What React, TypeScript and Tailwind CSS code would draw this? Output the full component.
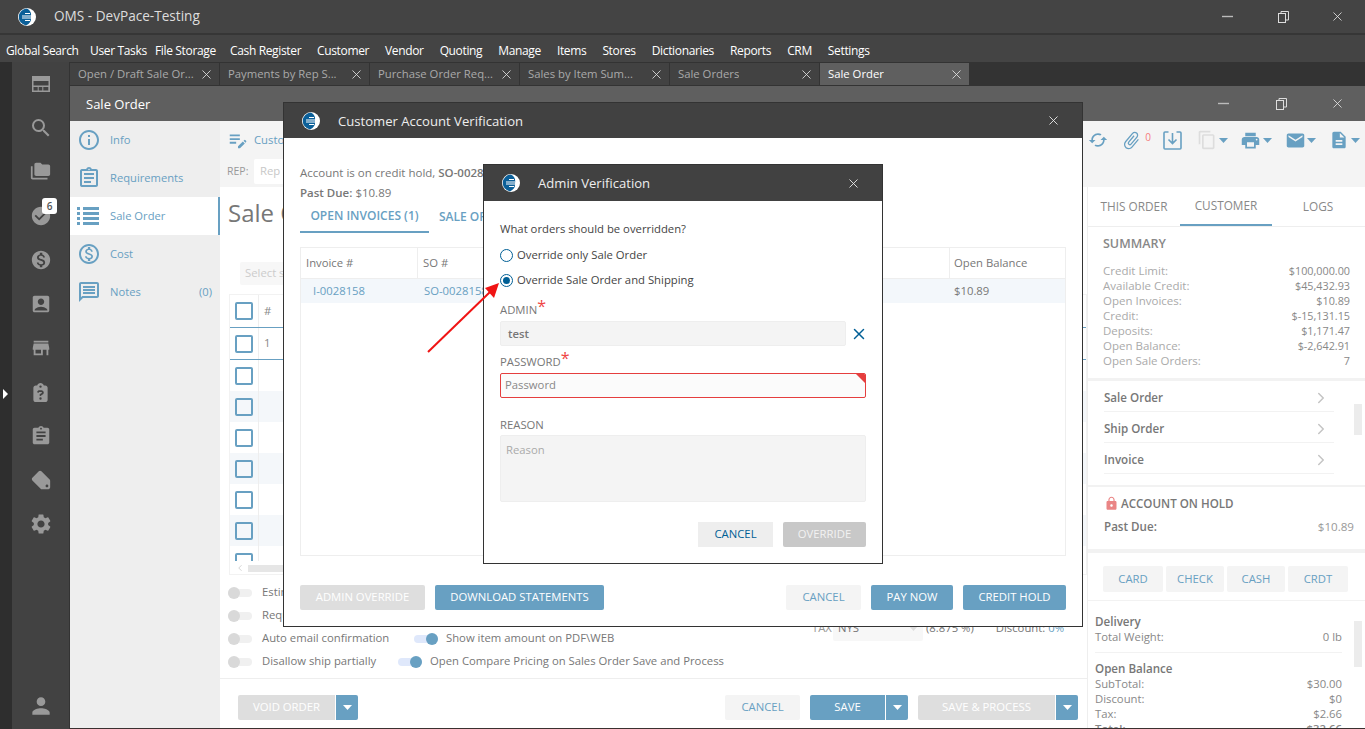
import { ChevronRight, X } from 'lucide-react';
import {
  MdAccountBox,
  MdAssignment,
  MdAttachFile,
  MdCheckCircle,
  MdDescription,
  MdEmail,
  MdFolderCopy,
  MdInfoOutline,
  MdLocalOffer,
  MdLocalPrintshop,
  MdLock,
  MdMonetizationOn,
  MdOutlineAssignment,
  MdOutlineContentCopy,
  MdOutlineEditNote,
  MdOutlineMessage,
  MdOutlineMonetizationOn,
  MdPerson,
  MdSearch,
  MdSettings,
  MdStore,
  MdSync,
} from 'react-icons/md';
import { FaClipboardQuestion } from 'react-icons/fa6';

const MENU_LEFT = [
  ['Global Search', 'w-[84px]'],
  ['User Tasks', 'w-[65px]'],
  ['File Storage', 'w-[75px]'],
  ['Cash Register', 'w-[87px]'],
  ['Customer', 'w-[52px]'],
];
const MENU_RIGHT = ['Vendor', 'Quoting', 'Manage', 'Items', 'Stores', 'Dictionaries', 'Reports', 'CRM', 'Settings'];

const TABS = [
  'Open / Draft Sale Or...',
  'Payments by Rep S...',
  'Purchase Order Req...',
  'Sales by Item Sum...',
  'Sale Orders',
  'Sale Order',
];

const SUMMARY = [
  ['Credit Limit:', '$100,000.00'],
  ['Available Credit:', '$45,432.93'],
  ['Open Invoices:', '$10.89'],
  ['Credit:', '$-15,131.15'],
  ['Deposits:', '$1,171.47'],
  ['Open Balance:', '$-2,642.91'],
  ['Open Sale Orders:', '7'],
];

function Logo() {
  return (
    <svg width="20" height="20" viewBox="0 0 20 20" className="shrink-0">
      <circle cx="10" cy="10" r="9" fill="#fff" />
      <path d="M10 1.5a8.5 8.5 0 0 0-1 16.9 8 8 0 0 0 5-8.4 8 8 0 0 0-4-8.5z" fill="#0b5f98" />
      <path d="M8 6.5h5M5 9h9M5 11h9M8 13.5h5" stroke="#fff" strokeWidth="1" />
    </svg>
  );
}

function Caret({ color = 'white' }: { color?: string }) {
  return (
    <svg width="9" height="5" viewBox="0 0 9 5">
      <path d="M0 0h9L4.5 5z" fill={color} />
    </svg>
  );
}

function WindowControls({ gapA, gapB }: { gapA: string; gapB: string }) {
  return (
    <div className="flex items-center">
      <svg width="11" height="11" viewBox="0 0 11 11" className={gapA}>
        <path d="M0 5.5h11" stroke="#bbb" strokeWidth="1.4" />
      </svg>
      <svg width="11" height="12" viewBox="0 0 11 12" fill="none" stroke="#ddd" className={gapB}>
        <rect x="0.5" y="2.5" width="7" height="9" />
        <path d="M3 2.5v-2h7.5v8.5h-3" />
      </svg>
      <X size={15} strokeWidth={1.3} className="text-[#e8e8e8]" />
    </div>
  );
}

function Toggle({ on = false }: { on?: boolean }) {
  return (
    <span className={`relative block h-[8px] w-[24px] shrink-0 rounded-full ${on ? 'bg-[#dfe8fb]' : 'bg-[#f0f0f0]'}`}>
      <span
        className={`absolute top-[-2px] h-[12px] w-[12px] rounded-full ${on ? 'right-0 bg-[#68a0c2]' : 'left-0 bg-[#d9d9d9]'}`}
      />
    </span>
  );
}

function Check() {
  return <span className="block h-[18px] w-[18px] rounded-[2px] border-2 border-[#68a0c2]" />;
}

function SplitCaret() {
  return (
    <span className="ml-px flex h-[25px] w-[22px] items-center justify-center rounded-r-[2px] bg-[#68a0c2]">
      <Caret />
    </span>
  );
}

function RailIcons() {
  const cls = 'text-[#999]';
  const slot = 'flex h-[44px] w-full shrink-0 items-start justify-center';
  return (
    <div className="flex w-[57px] flex-col items-center pt-[13px]">
      <div className={`${slot} pt-[1px]`}>
        <svg width="18" height="16" viewBox="0 0 18 16" fill="#999">
          <path d="M0 0h18v16H0zM1.500 5v9.500h4.200V11h1v3.500h3.600V11h1v3.500h5V11H1.500V9.500h15V5z" fillRule="evenodd" />
        </svg>
      </div>
      <div className={slot}><MdSearch size={24} className={`${cls} -mt-[3px]`} /></div>
      <div className={slot}><MdFolderCopy size={21} className={`${cls} -mt-[2px]`} /></div>
      <div className={`${slot} relative`}>
        <MdCheckCircle size={22} className={`${cls} -mt-[2px]`} />
        <span className="absolute left-[30px] top-[-9px] flex h-[16px] w-[15px] items-center justify-center rounded-[3px] bg-white text-[10px] font-semibold text-[#555]">
          6
        </span>
      </div>
      <div className={slot}><MdMonetizationOn size={22} className={`${cls} -mt-[2px]`} /></div>
      <div className={slot}><MdAccountBox size={22} className={`${cls} -mt-[2px]`} /></div>
      <div className={slot}><MdStore size={22} className={`${cls} -mt-[2px]`} /></div>
      <div className={slot}><FaClipboardQuestion size={19} className={cls} /></div>
      <div className={slot}><MdAssignment size={22} className={`${cls} -mt-[2px]`} /></div>
      <div className={slot}><MdLocalOffer size={22} className={`${cls} -mt-[2px] rotate-[90deg] scale-x-[-1]`} /></div>
      <div className={slot}><MdSettings size={24} className={`${cls} -mt-[3px]`} /></div>
      <div className="mt-auto mb-[10px] flex justify-center">
        <MdPerson size={26} className={cls} />
      </div>
    </div>
  );
}

function NavItem({ icon, label, active, count }: { icon: React.ReactNode; label: string; active?: boolean; count?: string }) {
  return (
    <div className={`flex h-[38px] items-center pl-[7px] pr-[8px] text-[11.2px] text-[#68a0c2] ${active ? 'border-r-2 border-[#68a0c2] bg-white' : ''}`}>
      <span className="flex w-[33px] shrink-0 items-center justify-start">{icon}</span>
      <span>{label}</span>
      {count && <span className="ml-auto">{count}</span>}
    </div>
  );
}

function Toolbar() {
  return (
    <div className="flex h-[66px] shrink-0 bg-[#f4f4f4]">
      <div className="flex w-[120px] flex-col pl-[7px] pt-[8px]">
        <div className="flex items-center gap-[5px] text-[11.3px] text-[#68a0c2]">
          <MdOutlineEditNote size={22} />
          <span>Customer</span>
        </div>
        <div className="mt-[8px] flex items-center text-[10.500px] text-[#999]">
          <span className="w-[27px]">REP:</span>
          <span className="flex h-[25px] w-[60px] items-center rounded-[2px] bg-white px-[6px] text-[11.3px] text-[#c8c8c8]">Rep</span>
        </div>
      </div>
      <div className="ml-auto flex h-[38px] items-center pr-[5px] text-[#68a0c2]">
        <MdSync size={20} className="mr-[13px] rotate-90" />
        <MdAttachFile size={21} className="rotate-[40deg]" />
        <span className="mb-[6px] ml-[3px] mr-[12px] text-[10px] text-[#f47c7c]">0</span>
        <svg width="19" height="19" viewBox="0 0 19 19" fill="none" stroke="#68a0c2" strokeWidth="1.6" className="mr-[15px]">
          <path d="M5.500 1H2a1 1 0 0 0-1 1v15a1 1 0 0 0 1 1h15a1 1 0 0 0 1-1V2a1 1 0 0 0-1-1h-3.500M9.500 2v10M5.500 8.500l4 4 4-4" />
        </svg>
        <MdOutlineContentCopy size={20} className="text-[#ddd]" />
        <span className="ml-[2px] mr-[12px]"><Caret color="#68a0c2" /></span>
        <MdLocalPrintshop size={21} />
        <span className="ml-[2px] mr-[13px]"><Caret color="#68a0c2" /></span>
        <MdEmail size={21} />
        <span className="ml-[1px] mr-[13px]"><Caret color="#68a0c2" /></span>
        <MdDescription size={20} />
        <span className="ml-[2px]"><Caret color="#68a0c2" /></span>
      </div>
    </div>
  );
}

function MainPanel() {
  const rows = [0, 1, 2, 3, 4, 5, 6];
  return (
    <div className="flex min-w-0 flex-1 flex-col bg-white">
      <div className="flex min-h-0 flex-1 flex-col pl-[9px]">
        <div className="-ml-px mt-[11px] h-[30px] text-[24px] leading-[30px] text-[#777]">Sale Order</div>
        <div className="ml-[11px] mt-[34px] flex h-[23px] w-[200px] items-center rounded-[2px] bg-[#f7f7f7] px-[5px] text-[11.3px] text-[#ccc]">
          Select status
        </div>
        <div className="mt-[9px] h-[281px] shrink-0 overflow-hidden border border-[#f2f2f2] text-[11.3px] text-[#888]">
          <div className="flex h-[33px] items-center border-b border-[#68a0c2]">
            <div className="flex h-full w-[29px] items-center justify-center border-r border-[#eee]"><Check /></div>
            <span className="pl-[5px]">#</span>
          </div>
          <div className="flex h-[32px] items-center border-b border-[#68a0c2]">
            <div className="flex h-full w-[29px] items-center justify-center border-r border-[#eee]"><Check /></div>
            <span className="pl-[5px]">1</span>
          </div>
          <div className="h-[201px] overflow-hidden">
            {rows.map((row) => (
              <div key={row} className={`flex h-[31px] items-center ${row % 2 === 1 ? 'bg-[#f4f7fa]' : 'bg-white'}`}>
                <div className="flex h-full w-[29px] items-center justify-center border-r border-[#eee]"><Check /></div>
              </div>
            ))}
          </div>
          <div className="flex h-[14px] items-center pl-[5px]">
            <ChevronRight size={10} className="rotate-180 text-[#ccc]" />
            <span className="ml-[3px] h-[7px] w-[300px] bg-[#e6e6e6]" />
          </div>
        </div>

        <div className="ml-[-1px] mt-[6px] flex text-[11.3px] text-[#777]">
          <div className="flex w-[496px] shrink-0 flex-col whitespace-nowrap">
            <div className="flex h-[23px] items-center gap-[10px]"><Toggle /><span>Estimated</span></div>
            <div className="flex h-[23px] items-center gap-[10px]"><Toggle /><span>Require</span></div>
            <div className="flex h-[23px] items-center gap-[10px]">
              <Toggle /><span className="w-[130px]">Auto email confirmation</span>
              <span className="ml-[12px]"><Toggle on /></span><span className="-ml-[2px]">Show item amount on PDF\WEB</span>
            </div>
            <div className="flex h-[23px] items-center gap-[10px]">
              <Toggle /><span className="w-[114px]">Disallow ship partially</span>
              <span className="ml-[12px]"><Toggle on /></span><span className="-ml-[2px]">Open Compare Pricing on Sales Order Save and Process</span>
            </div>
          </div>
          <div className="ml-[88px] flex h-[92px] items-center whitespace-nowrap pt-[2px]">
            <span className="w-[21px] text-[#999]">TAX</span>
            <span className="flex h-[25px] w-[90px] items-center justify-between rounded-[2px] bg-[#f7f7f7] px-[5px]">
              NYS
              <Caret color="#ddd" />
            </span>
            <span className="ml-[3px]">(8.875 %)</span>
            <span className="ml-[22px]">Discount: <span className="text-[#68a0c2]">0%</span></span>
          </div>
        </div>
      </div>

      <div className="flex h-[50px] shrink-0 items-start border-t border-[#eee] pl-[18px] pr-[9px] pt-[16px] text-[11.3px]">
        <span className="flex h-[25px] w-[97px] items-center justify-center rounded-l-[2px] bg-[#dedede] text-white">VOID ORDER</span>
        <SplitCaret />
        <span className="ml-auto flex h-[25px] w-[75px] items-center justify-center rounded-[2px] bg-[#f4f4f4] text-[#68a0c2]">CANCEL</span>
        <span className="ml-[10px] flex h-[25px] w-[75px] items-center justify-center rounded-l-[2px] bg-[#68a0c2] text-white">SAVE</span>
        <SplitCaret />
        <span className="ml-[10px] flex h-[25px] w-[137px] items-center justify-center rounded-l-[2px] bg-[#dedede] text-white">SAVE &amp; PROCESS</span>
        <SplitCaret />
      </div>
    </div>
  );
}

function Scrollbar({ pos }: { pos: string }) {
  return <div className={`absolute right-[3px] w-[8px] bg-[#ececec] ${pos}`} />;
}

function RightPanel() {
  return (
    <div className="relative flex w-[278px] shrink-0 flex-col self-stretch border-l border-[#eee] bg-white">
      <div className="flex h-[40px] shrink-0 border-b border-[#eee] text-[11.8px] text-[#888]">
        <div className="flex w-[92px] items-center justify-center">THIS ORDER</div>
        <div className="flex w-[92px] items-center justify-center border-b-2 border-[#68a0c2]">CUSTOMER</div>
        <div className="flex w-[92px] items-center justify-center">LOGS</div>
      </div>

      <div className="h-[151px] shrink-0 pl-[15px] pr-[15px] pt-[9px]">
        <div className="text-[12.500px] font-semibold leading-[16px] text-[#888]">SUMMARY</div>
        <div className="mt-[11px] text-[11.500px] leading-[15px] text-[#aaa]">
          {SUMMARY.map(([label, value]) => (
            <div key={label} className="flex justify-between">
              <span>{label}</span>
              <span className="text-[10.800px] text-[#888]">{value}</span>
            </div>
          ))}
        </div>
      </div>

      <div className="h-[109px] shrink-0 overflow-hidden border-t-[3px] border-b-2 border-[#f2f2f2] pl-[16px] pr-[31px] text-[11.600px] font-semibold text-[#777]">
        {['Sale Order', 'Ship Order', 'Invoice', 'Customer Credit'].map((name) => (
          <div key={name} className="flex h-[31px] items-center justify-between border-b border-[#f2f2f2] pt-[3px]">
            <span>{name}</span>
            <ChevronRight size={18} strokeWidth={2} className="mr-[4px] text-[#c4c4c4]" />
          </div>
        ))}
      </div>
      <Scrollbar pos="top-[217px] h-[31px]" />

      <div className="h-[62px] shrink-0 px-[16px] pt-[8px] text-[11.600px] text-[#777]">
        <div className="flex items-center gap-[2px] font-semibold">
          <MdLock size={15} className="text-[#ea8585]" />
          ACCOUNT ON HOLD
        </div>
        <div className="mr-[-5px] mt-[6px] flex justify-between">
          <span className="font-semibold">Past Due:</span>
          <span className="text-[#999]">$10.89</span>
        </div>
      </div>

      <div className="flex h-[51px] shrink-0 items-start gap-[3px] border-t-4 border-[#f2f2f2] pl-[15px] pt-[13px] text-[11.300px] text-[#68a0c2]">
        <span className="flex h-[26px] w-[60px] items-center justify-center rounded-[2px] bg-[#f4f4f4]">CARD</span>
        <span className="flex h-[26px] w-[58px] items-center justify-center rounded-[2px] bg-[#f4f4f4]">CHECK</span>
        <span className="flex h-[26px] w-[58px] items-center justify-center rounded-[2px] bg-[#f4f4f4]">CASH</span>
        <span className="flex h-[26px] w-[60px] items-center justify-center rounded-[2px] bg-[#f4f4f4]">CRDT</span>
      </div>

      <div className="min-h-0 flex-1 overflow-hidden border-t border-[#f2f2f2] pl-[7px] pr-[23px] pt-[13px] text-[11.300px] leading-[15px] text-[#888]">
        <div className="text-[11.600px] font-semibold text-[#777]">Delivery</div>
        <div className="flex justify-between"><span>Total Weight:</span><span>0 lb</span></div>
        <div className="my-[8px] h-px bg-[#f2f2f2]" />
        <div className="text-[11.600px] font-semibold text-[#777]">Open Balance</div>
        <div className="flex justify-between"><span>SubTotal:</span><span>$30.00</span></div>
        <div className="flex justify-between"><span>Discount:</span><span>$0</span></div>
        <div className="flex justify-between"><span>Tax:</span><span>$2.66</span></div>
        <div className="flex justify-between font-semibold"><span>Total:</span><span>$32.66</span></div>
      </div>
      <Scrollbar pos="top-[434px] h-[46px]" />
    </div>
  );
}

function CustomerModal() {
  return (
    <div className="absolute left-[283px] top-[102px] flex h-[525px] w-[800px] flex-col border border-[#333] bg-white">
      <div className="flex h-[35px] shrink-0 items-center bg-[#414141] pl-[17px] pr-[21px] text-[13.100px] text-[#eee]">
        <Logo />
        <span className="ml-[17px] pt-[2px]">Customer Account Verification</span>
        <X size={15} strokeWidth={1.4} className="ml-auto" />
      </div>
      <div className="flex min-h-0 flex-1 flex-col px-[16px] text-[11.300px] text-[#777]">
        <div className="mt-[25px] text-[11.500px] leading-[20px]">
          <div>Account is on credit hold, <b className="font-semibold">SO-0028158</b></div>
          <div><b className="font-semibold">Past Due:</b> $10.89</div>
        </div>
        <div className="-mt-[3px] flex h-[33px] shrink-0 text-[12px] text-[#68a0c2]">
          <span className="flex w-[129px] items-center justify-center border-b-2 border-[#68a0c2] font-semibold">OPEN INVOICES (1)</span>
          <span className="ml-[10px] flex items-center font-semibold">SALE ORDERS</span>
        </div>
        <div className="mt-[14px] h-[309px] shrink-0 border border-[#eee]">
          <div className="flex h-[31px] items-center border-b border-[#eee]">
            <span className="flex h-full w-[117px] items-center border-r border-[#eee] pl-[5px] pt-[1px]">Invoice #</span>
            <span className="flex h-full w-[532px] items-center border-r border-[#eee] pl-[5px] pt-[1px]">SO #</span>
            <span className="pl-[4px] pt-[1px]">Open Balance</span>
          </div>
          <div className="flex h-[24px] items-center bg-[#f3f7fb]">
            <span className="w-[117px] pl-[12px] text-[#68a0c2]">I-0028158</span>
            <span className="w-[532px] pl-[6px] text-[#68a0c2]">SO-0028158</span>
            <span className="pl-[4px]">$10.89</span>
          </div>
        </div>
        <div className="mt-[29px] flex h-[25px] shrink-0 text-white">
          <span className="flex w-[125px] items-center justify-center rounded-[2px] bg-[#dedede]">ADMIN OVERRIDE</span>
          <span className="ml-[10px] flex w-[169px] items-center justify-center rounded-[2px] bg-[#68a0c2]">DOWNLOAD STATEMENTS</span>
          <span className="ml-auto flex w-[75px] items-center justify-center rounded-[2px] bg-[#f4f4f4] text-[#68a0c2]">CANCEL</span>
          <span className="ml-[10px] flex w-[82px] items-center justify-center rounded-[2px] bg-[#68a0c2]">PAY NOW</span>
          <span className="ml-[10px] flex w-[103px] items-center justify-center rounded-[2px] bg-[#68a0c2]">CREDIT HOLD</span>
        </div>
      </div>
    </div>
  );
}

function AdminModal() {
  return (
    <div className="absolute left-[483px] top-[164px] flex h-[400px] w-[400px] flex-col border border-[#333] bg-white">
      <div className="flex h-[36px] shrink-0 items-center bg-[#414141] pl-[17px] pr-[21px] text-[13.100px] text-[#eee]">
        <Logo />
        <span className="ml-[17px] pt-[2px]">Admin Verification</span>
        <X size={15} strokeWidth={1.4} className="ml-auto" />
      </div>
      <div className="flex flex-col px-[16px] text-[11.300px] text-[#444]">
        <div className="mt-[20px] leading-[16px]">What orders should be overridden?</div>
        <div className="mt-[10px] flex h-[16px] items-center gap-[4px]">
          <span className="h-[13px] w-[13px] rounded-full border border-[#005f95]" />
          Override only Sale Order
        </div>
        <div className="mt-[9px] flex h-[16px] items-center gap-[4px]">
          <span className="flex h-[13px] w-[13px] items-center justify-center rounded-full border border-[#005f95]">
            <span className="h-[7px] w-[7px] rounded-full bg-[#005f95]" />
          </span>
          Override Sale Order and Shipping
        </div>
        <div className="mt-[12px] h-[16px] leading-[16px] text-[#777]">
          ADMIN<span className="relative top-[-2px] text-[16px] text-[#ef4444]">*</span>
        </div>
        <div className="mt-[5px] flex items-center">
          <div className="flex h-[25px] w-[346px] shrink-0 items-center rounded-[2px] border border-[#eee] bg-[#f4f4f4] px-[7px] pt-[1px] font-semibold text-[#777]">test</div>
          <X size={18} strokeWidth={2} className="ml-[4px] shrink-0 text-[#005f95]" />
        </div>
        <div className="mt-[6px] h-[16px] leading-[16px] text-[#777]">
          PASSWORD<span className="relative top-[-2px] text-[16px] text-[#ef4444]">*</span>
        </div>
        <div className="relative mt-[5px] flex h-[25px] items-center overflow-hidden rounded-[2px] border border-[#e53e3e] bg-[#fbfbfb] px-[4px] text-[#888]">
          Password
          <span className="absolute right-0 top-0 border-l-[9px] border-t-[9px] border-l-transparent border-t-[#e53e3e]" />
        </div>
        <div className="mt-[19px] h-[16px] leading-[16px] text-[#777]">REASON</div>
        <div className="mt-[2px] h-[67px] rounded-[2px] border border-[#eee] bg-[#f4f4f4] px-[5px] pt-[6px] text-[#aaa]">Reason</div>
        <div className="mt-[20px] flex h-[25px] justify-end">
          <span className="flex w-[75px] items-center justify-center bg-[#eee] text-[#005f95]">CANCEL</span>
          <span className="ml-[10px] flex w-[83px] items-center justify-center rounded-[2px] bg-[#c8c8c8] text-[#f2f2f2]">OVERRIDE</span>
        </div>
      </div>
    </div>
  );
}

export default function App() {
  return (
    <div className="relative flex h-[729px] w-[1365px] flex-col overflow-hidden bg-[#333] font-['Open_Sans',sans-serif]">
      <div className="flex h-[35px] shrink-0 items-center border-b-2 border-[#363636] bg-[#444] pl-[17px] pr-[20px]">
        <Logo />
        <span className="ml-[17px] text-[13.600px] text-[#ddd]">OMS - DevPace-Testing</span>
        <div className="ml-auto"><WindowControls gapA="mr-[45px]" gapB="mr-[41px]" /></div>
      </div>
      <div className="flex h-[27px] shrink-0 items-center gap-[16px] bg-[#444] pl-[6px] pt-[4px] text-[12px] tracking-[-0.35px] text-white">
        <div className="flex">
          {MENU_LEFT.map(([item, width]) => <span key={item} className={`${width} whitespace-nowrap`}>{item}</span>)}
        </div>
        {MENU_RIGHT.map((item) => <span key={item}>{item}</span>)}
      </div>

      <div className="flex min-h-0 flex-1">
        <div className="flex w-[70px] shrink-0 border-r border-[#333] bg-[#424242]">
          <div className="relative w-[12px] shrink-0 bg-[#2e2e2e]">
            <span className="absolute left-[3px] top-[327px] border-y-[5px] border-l-[5px] border-y-transparent border-l-white" />
          </div>
          <RailIcons />
        </div>

        <div className="flex min-w-0 flex-1 flex-col">
          <div className="flex h-[24px] shrink-0 border-y border-[#333] bg-[#333]">
            {TABS.map((tab, index) => (
              <div
                key={tab}
                className={`flex h-full w-[150px] items-center justify-between border-r border-[#333] pl-[8px] pr-[5px] pt-[1px] text-[11.300px] ${index === 5 ? 'bg-[#5f5f5f] text-white' : 'bg-[#424242] text-[#aaa]'}`}
              >
                <span className="truncate">{tab}</span>
                <X size={15} strokeWidth={1.3} className="shrink-0 text-[#e8e8e8]" />
              </div>
            ))}
          </div>
          <div className="flex h-[35px] shrink-0 items-center bg-[#5f5f5f] pl-[16px] pr-[20px] text-[13px] text-white">
            <span className="pt-[2px]">Sale Order</span>
            <div className="ml-auto"><WindowControls gapA="mr-[47px]" gapB="mr-[43px]" /></div>
          </div>
          <div className="flex min-h-0 flex-1">
            <div className="flex w-[150px] shrink-0 flex-col bg-[#eee]">
              <NavItem icon={<MdInfoOutline size={24} />} label="Info" />
              <NavItem icon={<MdOutlineAssignment size={24} />} label="Requirements" />
              <NavItem
                active
                icon={
                  <svg width="22" height="18" viewBox="0 0 22 18" fill="#68a0c2">
                    <path d="M0 0h3v3H0zM6 0h16v3H6zM0 5h3v3H0zM6 5h16v3H6zM0 10h3v3H0zM6 10h16v3H6zM0 15h3v3H0zM6 15h16v3H6z" />
                  </svg>
                }
                label="Sale Order"
              />
              <NavItem icon={<MdOutlineMonetizationOn size={24} />} label="Cost" />
              <NavItem icon={<MdOutlineMessage size={24} />} label="Notes" count="(0)" />
            </div>
            <div className="flex min-w-0 flex-1 flex-col">
              <Toolbar />
              <div className="flex min-h-0 flex-1">
                <MainPanel />
                <RightPanel />
              </div>
            </div>
          </div>
          <div className="h-px shrink-0 bg-[#3a3030]" />
        </div>
      </div>

      <CustomerModal />
      <AdminModal />

      <svg width="90" height="90" viewBox="0 0 90 90" className="absolute left-[420px] top-[275px]">
        <path d="M8 77L70 17" stroke="#f01414" strokeWidth="2" />
        <path d="M79 8L65 13L74 23z" fill="#f01414" />
      </svg>
    </div>
  );
}
